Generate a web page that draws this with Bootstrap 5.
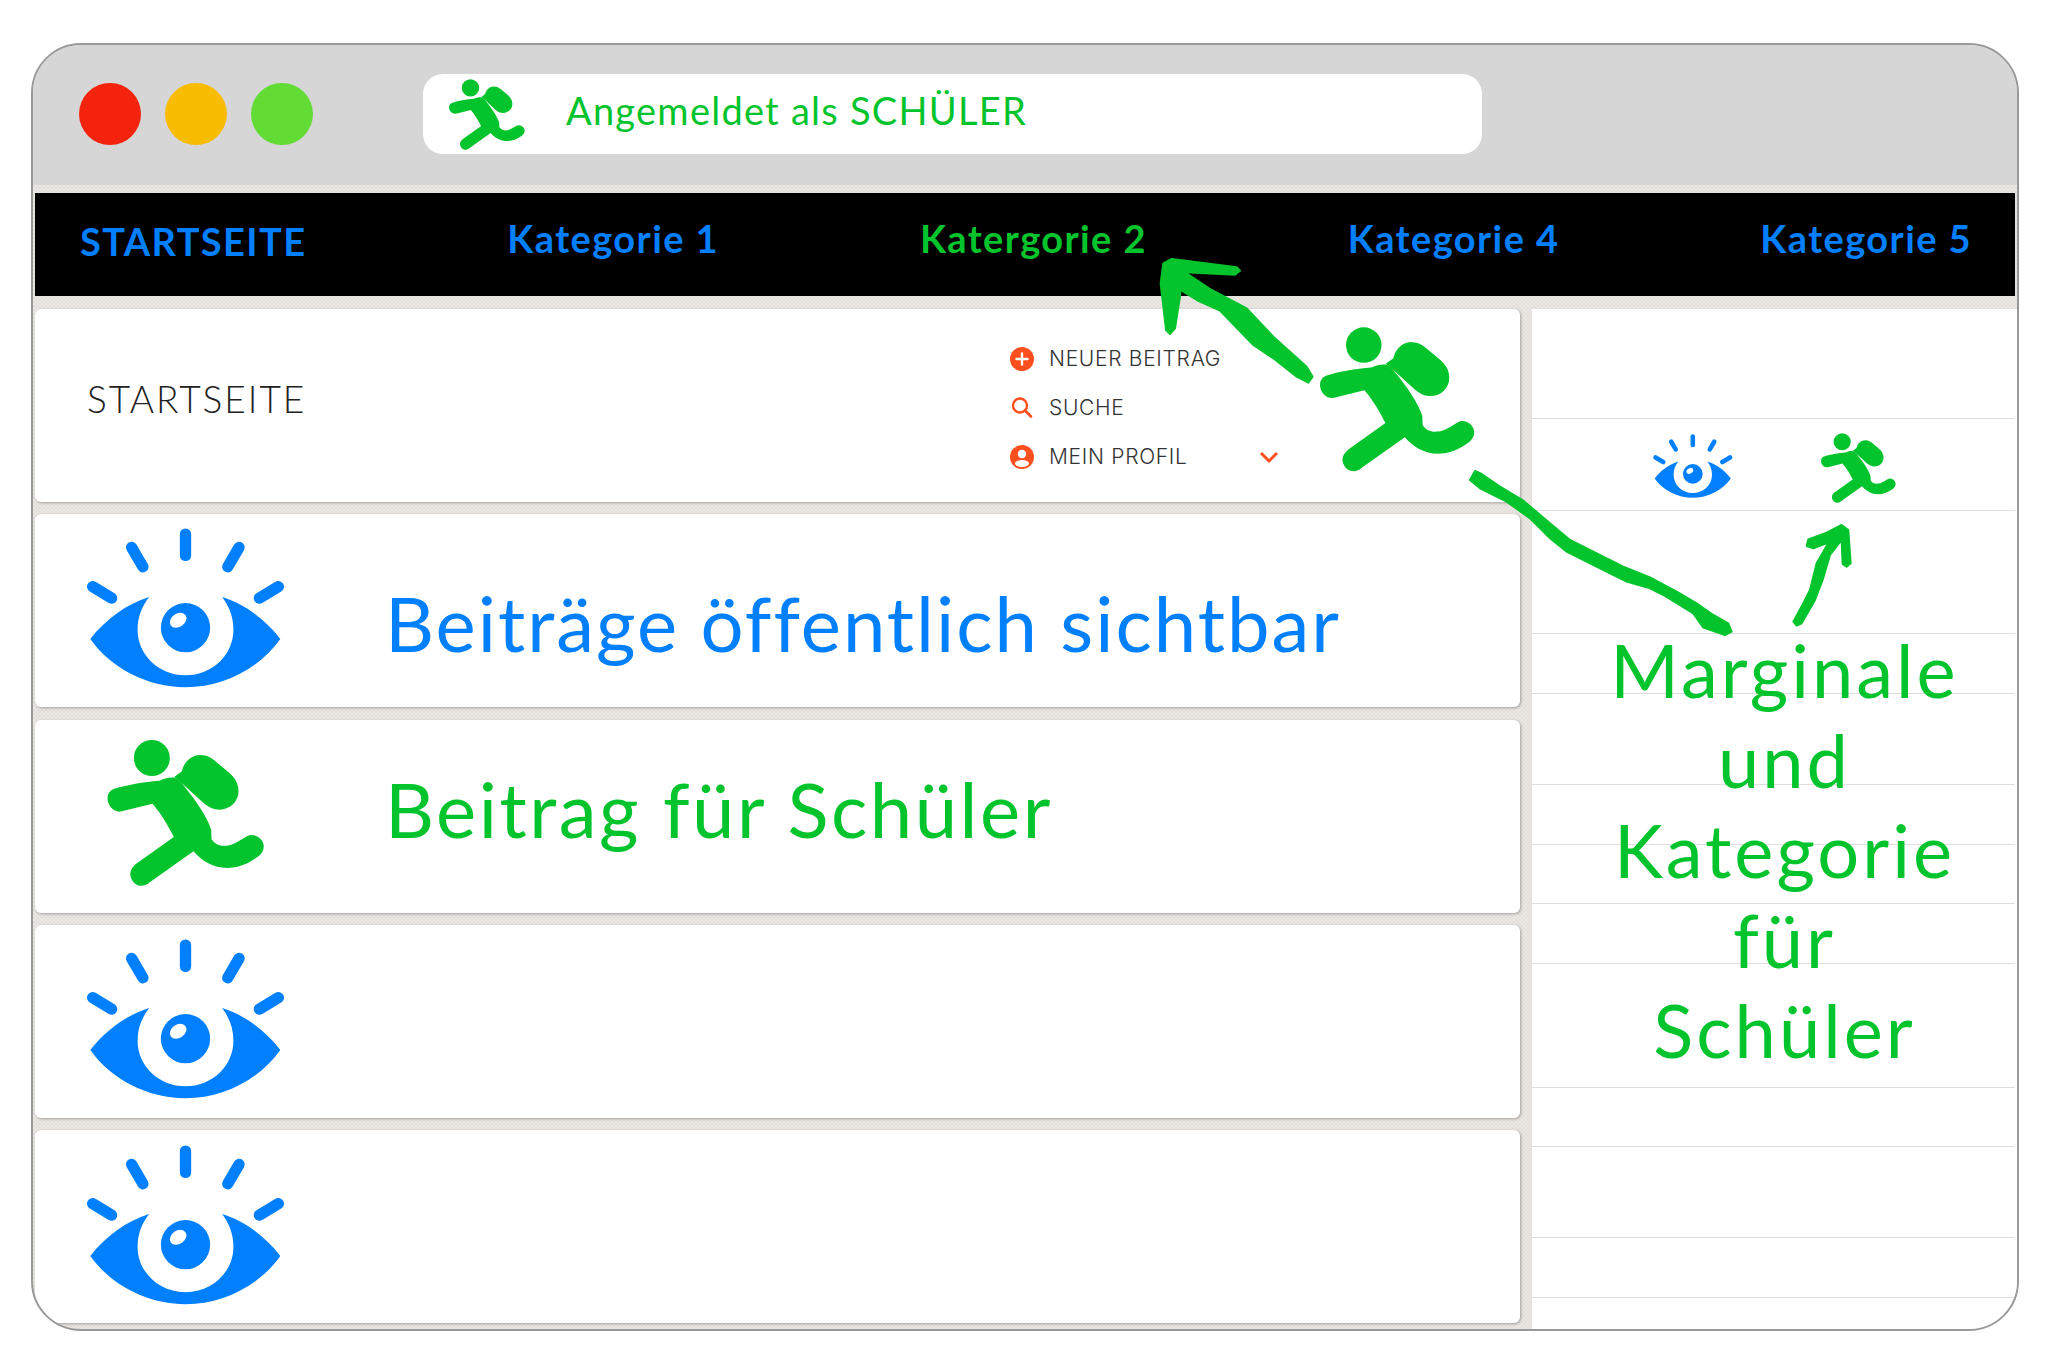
<!DOCTYPE html>
<html lang="de">
<head>
  <meta charset="UTF-8" />
  <title>Angemeldet als Schüler</title>
  <link href="https://cdn.jsdelivr.net/npm/bootstrap@5.3.0/dist/css/bootstrap.min.css" rel="stylesheet"/>
  <style>
    body { background: #fff; font-family: "Lato", "Liberation Sans", sans-serif; }
    .stage { padding: 43px 29px 17px 31px; height: 1348px; }
    .browser-win {
      position: relative; height: 100%; overflow: hidden;
      border: 2px solid #999; border-radius: 50px;
      background: repeating-conic-gradient(#ebe8e4 0 25%, #e3e0db 0 50%) 0 0 / 4px 4px;
    }

    /* window title bar */
    .title-strip { height: 140px; background: #d6d6d6; padding: 29px 0 0 46px; }
    .dots { gap: 24px; margin-top: 9px; }
    .dot { width: 62px; height: 62px; border-radius: 50%; }
    .dot-red { background: #f3230d; }
    .dot-amber { background: #f8bc02; }
    .dot-lime { background: #62db35; }
    .url-bar {
      width: 1059px; height: 80px; margin-left: 110px; border-radius: 20px; background: #fff;
      color: #03c42c; font-size: 38px; letter-spacing: 1.25px; padding-left: 26px;
    }
    .url-bar span { margin-left: 41px; padding-bottom: 8px; }
    .url-runner { width: 76px; height: 71px; }

    /* black category bar */
    .top-nav { margin: 8px 2px 0; height: 103px; background: #000; padding: 0 43px 12px 45px; }
    .top-nav .nav-link { color: #007fff; font-weight: 700; font-size: 38px; letter-spacing: 1.4px; padding: 0; }
    .top-nav .nav-link.is-green { color: #03c42c; }
    .top-nav .nav-link.first { margin-top: 6px; }

    /* content */
    .page-cols { margin: 13px 0 0 2px; gap: 12px; }
    .main-col { width: 1485px; gap: 12.25px; }
    .post {
      height: 193px; border: 0; border-radius: 6px; background: #fff;
      box-shadow: 1px 1px 3px rgba(0,0,0,.3);
    }
    .post-icon { width: 350px; padding-left: 52px; }
    .post-text { font-size: 76px; letter-spacing: 2px; }
    .post-text.text-blue { padding-top: 24px; }
    .post-text.text-lime { padding-bottom: 14px; letter-spacing: 2.5px; }
    .text-blue { color: #007fff; }
    .text-lime { color: #03c42c; }
    .eye-big { width: 198px; height: 160px; margin-bottom: 6px; }
    .post:nth-child(n+4) .eye-big { margin-bottom: 4px; }
    .runner-big { width: 162px; height: 150px; margin: 0 0 6px 18px; }

    .head-title { font-weight: 300; font-size: 37px; letter-spacing: 2px; color: #222; margin: 0 0 14px 52px; }
    .head-menu { margin: 4px 241px 0 auto; width: 270px; }
    .head-menu li { font-family: "Inter", "Lato", sans-serif; font-weight: 300; font-size: 21px; letter-spacing: .7px; color: #333; height: 49px; }
    .menu-ic { width: 26px; height: 26px; margin-right: 14px; flex: none; }
    .menu-chevron { width: 20px; height: 14px; margin-left: auto; }

    /* right column with ruled rows */
    .margin-col { flex: 1; height: 1020px; background: #fff; }
    .margin-row { padding: 0; margin-right: 2px; border-color: #dedede; border-bottom-width: 2px; background: transparent; }
    .r-110 { height: 110px; }
    .r-92 { height: 92px; }
    .r-123 { height: 123px; }
    .r-60 { height: 60px; }
    .r-59 { height: 59px; }
    .r-91 { height: 91px; }
    .r-124 { height: 124px; }
    .margin-icons { gap: 88px; padding-left: 121px; }
    .eye-small { width: 80px; height: 64px; margin-top: 2px; }
    .runner-small { width: 75px; height: 70px; margin-top: 6px; }
    .margin-title {
      position: absolute; left: 1510px; width: 483px; top: 580px;
      color: #03c42c; font-size: 74px; line-height: 90px; letter-spacing: 3px; text-align: center;
    }
    .scribble { position: absolute; left: -33px; top: -45px; pointer-events: none; }
  </style>
</head>
<body>

<!-- shared icons -->
<svg width="0" height="0" class="position-absolute">
  <defs>
    <g id="eye-g">
      <g fill="none" stroke="#007fff" stroke-width="34" stroke-linecap="round">
        <line x1="466" y1="103" x2="466" y2="167"/>
        <line x1="304" y1="143" x2="338" y2="201"/>
        <line x1="627" y1="143" x2="593" y2="201"/>
        <line x1="187" y1="261" x2="244" y2="295"/>
        <line x1="745" y1="261" x2="688" y2="295"/>
      </g>
      <path fill="#007fff" d="M180 418C225 360 290 312 357 292C335 320 322 352 322 390C322 466 386 527 466 527C546 527 610 466 610 390C610 352 597 320 576 292C643 312 706 360 751 418C690 505 580 563 466 563C352 563 241 505 180 418Z"/>
      <circle cx="466" cy="384" r="74" fill="#007fff"/>
      <ellipse cx="444" cy="362" rx="27" ry="20" fill="#fff" transform="rotate(-35 444 362)"/>
    </g>
    <g id="runner-g" fill="#03c42c">
      <circle cx="365" cy="775" r="54"/>
      <path d="M432 832L455 815C462 785 485 765 512 766C530 766 545 775 556 785L598 820C615 835 625 852 625 875C625 905 600 930 568 930C550 930 535 923 520 910L460 855Z"/>
      <path d="M250 868C290 855 340 847 388 843C405 835 425 832 435 835C445 840 455 850 462 860C495 900 530 950 543 990L544 1018C555 1035 570 1040 590 1038C610 1036 630 1022 650 1010C668 1000 690 1010 698 1028C705 1045 698 1060 685 1070C655 1092 625 1105 590 1105C550 1105 515 1085 490 1055L360 1147C340 1165 315 1160 305 1140C295 1122 302 1105 318 1092L431 1012C415 980 395 945 367 912L275 935C255 940 238 925 233 905C230 888 235 875 250 868Z"/>
    </g>
  </defs>
</svg>

<div class="stage">
  <div class="browser-win">

    <div class="title-strip d-flex align-items-start">
      <div class="dots d-flex">
        <div class="dot dot-red"></div>
        <div class="dot dot-amber"></div>
        <div class="dot dot-lime"></div>
      </div>
      <div class="url-bar d-flex align-items-center">
        <svg class="url-runner" viewBox="232 720 471 440"><use href="#runner-g"/></svg>
        <span>Angemeldet als SCHÜLER</span>
      </div>
    </div>

    <nav class="top-nav nav justify-content-between align-items-center">
      <a class="nav-link first" href="#">STARTSEITE</a>
      <a class="nav-link" href="#">Kategorie 1</a>
      <a class="nav-link is-green" href="#">Katergorie 2</a>
      <a class="nav-link" href="#">Kategorie 4</a>
      <a class="nav-link" href="#">Kategorie 5</a>
    </nav>

    <div class="page-cols d-flex align-items-start">
      <div class="main-col d-flex flex-column">

        <div class="card post flex-row align-items-center">
          <div class="head-title">STARTSEITE</div>
          <ul class="head-menu list-unstyled">
            <li class="d-flex align-items-center">
              <svg class="menu-ic" viewBox="0 0 26 26"><circle cx="13" cy="13" r="12" fill="#ff4f1f"/><path d="M13 7.5v11M7.5 13h11" stroke="#fff" stroke-width="2.4" stroke-linecap="round"/></svg>
              NEUER BEITRAG
            </li>
            <li class="d-flex align-items-center">
              <svg class="menu-ic" viewBox="0 0 26 26"><circle cx="11" cy="10.5" r="7" fill="none" stroke="#ff4f1f" stroke-width="2.4"/><path d="M16 15.5l6 6" stroke="#ff4f1f" stroke-width="2.6" stroke-linecap="round"/></svg>
              SUCHE
            </li>
            <li class="d-flex align-items-center">
              <svg class="menu-ic" viewBox="0 0 26 26"><circle cx="13" cy="13" r="12" fill="#ff4f1f"/><circle cx="13" cy="10" r="4.2" fill="#fff"/><ellipse cx="13" cy="19.5" rx="7" ry="3.4" fill="#fff"/></svg>
              MEIN PROFIL
              <svg class="menu-chevron" viewBox="0 0 20 14"><path d="M2 3l8 8 8-8" fill="none" stroke="#ff4f1f" stroke-width="3"/></svg>
            </li>
          </ul>
        </div>

        <div class="card post flex-row align-items-center">
          <div class="post-icon"><svg class="eye-big d-block" viewBox="170 85 595 480"><use href="#eye-g"/></svg></div>
          <div class="post-text text-blue">Beiträge öffentlich sichtbar</div>
        </div>

        <div class="card post flex-row align-items-center">
          <div class="post-icon"><svg class="runner-big d-block" viewBox="225 715 485 450"><use href="#runner-g"/></svg></div>
          <div class="post-text text-lime">Beitrag für Schüler</div>
        </div>

        <div class="card post flex-row align-items-center">
          <div class="post-icon"><svg class="eye-big d-block" viewBox="170 85 595 480"><use href="#eye-g"/></svg></div>
        </div>

        <div class="card post flex-row align-items-center">
          <div class="post-icon"><svg class="eye-big d-block" viewBox="170 85 595 480"><use href="#eye-g"/></svg></div>
        </div>
      </div>

      <ul class="margin-col list-group list-group-flush rounded-0">
        <li class="list-group-item margin-row r-110"></li>
        <li class="list-group-item margin-row r-92 margin-icons d-flex align-items-center">
          <svg class="eye-small" viewBox="170 85 595 480"><use href="#eye-g"/></svg>
          <svg class="runner-small" viewBox="232 720 471 440"><use href="#runner-g"/></svg>
        </li>
        <li class="list-group-item margin-row r-123"></li>
        <li class="list-group-item margin-row r-60"></li>
        <li class="list-group-item margin-row r-91"></li>
        <li class="list-group-item margin-row r-60"></li>
        <li class="list-group-item margin-row r-59"></li>
        <li class="list-group-item margin-row r-60"></li>
        <li class="list-group-item margin-row r-124"></li>
        <li class="list-group-item margin-row r-59"></li>
        <li class="list-group-item margin-row r-91"></li>
        <li class="list-group-item margin-row r-60"></li>
        <li class="list-group-item margin-row"></li>
      </ul>
    </div>

    <div class="margin-title">Marginale<br>und<br>Kategorie<br>für<br>Schüler</div>

    <!-- hand drawn notes on top of the page, coordinates are page pixels -->
    <svg class="scribble" width="2048" height="1348" viewBox="0 0 2048 1348">
      <use href="#runner-g" transform="translate(1320 327) scale(.329) translate(-232 -720)"/>
      <g fill="#03c42c" stroke="#03c42c" stroke-width="6" stroke-linejoin="round">
        <path transform="translate(1140 240) scale(.3333)" d="M70 70L95 57L290 82L300 92L285 104L135 97L215 150L320 205L400 290L500 380L518 410L505 428L470 410L400 355L340 315L240 212L170 180L122 150L120 170L105 265L90 282L78 270L62 130Z"/>
        <path transform="translate(1450 460) scale(.3333)" d="M60 60L75 33L95 42L150 80L220 122L300 190L360 240L430 275L520 320L600 352L680 395L740 430L790 465L835 490L845 515L825 525L760 503L730 460L640 405L600 385L530 365L480 340L420 310L350 275L300 235L240 175L170 125L90 85Z"/>
        <path transform="translate(1640 420) scale(.3333)" d="M460 605L490 550L510 510L530 430L550 395L565 368L520 385L500 378L505 358L560 338L605 315L625 330L632 430L620 440L608 432L605 360L570 405L548 480L525 540L485 610L470 617Z"/>
      </g>
    </svg>
  </div>
</div>

<script src="https://cdn.jsdelivr.net/npm/bootstrap@5.3.0/dist/js/bootstrap.bundle.min.js"></script>
</body>
</html>
